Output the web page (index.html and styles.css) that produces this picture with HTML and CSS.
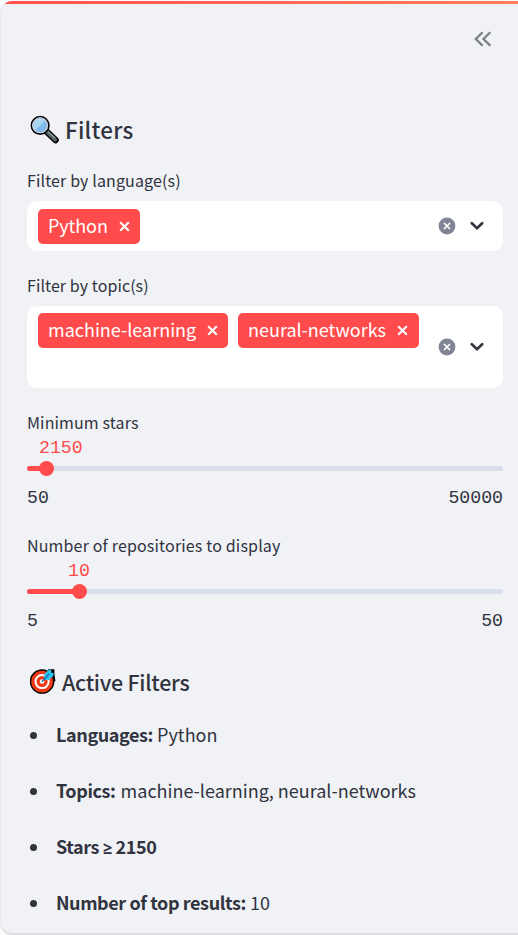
FILE: index.html
```html
<!DOCTYPE html>
<html lang="en">
<head>
<meta charset="utf-8">
<title>Filters</title>
<link rel="stylesheet" href="styles.css">
</head>
<body>
<svg class="symbols" width="0" height="0">
  <symbol id="cross" viewBox="0 0 12 12"><path d="M2 2l8 8M10 2l-8 8" fill="none" stroke="currentColor" stroke-width="1.9"/></symbol>
  <symbol id="clear" viewBox="0 0 18 18"><circle cx="9" cy="9" r="8.4" fill="#808495"/><path d="M6 6l6 6M12 6l-6 6" fill="none" stroke="#fff" stroke-width="1.7"/></symbol>
  <symbol id="chevron" viewBox="0 0 14 10"><path d="M1.8 2.2L7 7.2l5.2-5" fill="none" stroke="#31333f" stroke-width="2.6" stroke-linecap="round"/></symbol>
</svg>
<aside class="sidebar">
  <div class="accent"></div>
  <header class="top">
    <svg class="collapse" viewBox="0 0 18 16"><path d="M8.6 1.2L1.8 8l6.8 6.8M16.3 1.2L9.5 8l6.8 6.8" fill="none" stroke="#7c7e88" stroke-width="2.3"/></svg>
  </header>
  <main class="content">
    <h2 class="heading">
      <svg class="emoji" viewBox="0 0 30 30">
        <path d="M17.5 17.5l9 8.5" stroke="#000" stroke-width="6.6" stroke-linecap="round"/>
        <path d="M17 17l9 8.5" stroke="#526066" stroke-width="4" stroke-linecap="round"/>
        <path d="M18.3 16.8l7.6 7.3" stroke="#8b9a9c" stroke-width="1.3"/>
        <circle cx="10.5" cy="10.8" r="9" fill="#82b9ec" stroke="#000" stroke-width="1.8"/>
        <path d="M4.8 16.5A8 8 0 0 1 16.3 5.1z" fill="#a9d6f4"/>
        <circle cx="10.5" cy="10.8" r="7.6" fill="none" stroke="#c9cdd3" stroke-width="1.2"/>
      </svg>
      <span class="filters-title">Filters</span>
    </h2>

    <section class="field">
      <label class="label lang-label">Filter by language(s)</label>
      <div class="select">
        <div class="tags">
          <span class="tag"><span class="tag-text python">Python</span><svg class="x"><use href="#cross"/></svg></span>
        </div>
        <svg class="clear"><use href="#clear"/></svg>
        <svg class="chevron"><use href="#chevron"/></svg>
      </div>
    </section>

    <section class="field topics">
      <label class="label topic-label">Filter by topic(s)</label>
      <div class="select tall">
        <div class="tags">
          <span class="tag"><span class="tag-text ml">machine-learning</span><svg class="x"><use href="#cross"/></svg></span>
          <span class="tag"><span class="tag-text nn">neural-networks</span><svg class="x"><use href="#cross"/></svg></span>
        </div>
        <svg class="clear"><use href="#clear"/></svg>
        <svg class="chevron"><use href="#chevron"/></svg>
      </div>
    </section>

    <section class="slider">
      <label class="label stars-label">Minimum stars</label>
      <div class="value stars-value">2150</div>
      <div class="track"><div class="fill stars-fill"></div><div class="thumb"></div></div>
      <div class="range"><span>50</span><span>50000</span></div>
    </section>

    <section class="slider">
      <label class="label repos-label">Number of repositories to display</label>
      <div class="value repos-value">10</div>
      <div class="track"><div class="fill repos-fill"></div><div class="thumb"></div></div>
      <div class="range"><span>5</span><span>50</span></div>
    </section>

    <h2 class="heading active">
      <svg class="emoji" viewBox="0 0 30 30">
        <path d="M19.5 2h5v4l1 7-5 2z" fill="#000" stroke="#000" stroke-width="1.5"/>
        <circle cx="12.5" cy="14" r="12" fill="#f03a17" stroke="#000" stroke-width="1.5"/>
        <circle cx="12.5" cy="14" r="6.8" fill="none" stroke="#fff" stroke-width="2.1"/>
        <circle cx="12.5" cy="14" r="2.4" fill="#fff"/>
        <path d="M14.5 10l.5-4 5-4.5 2 .5v2.8l2.5.5-.5 3-4.5 4-4 .2z" fill="#2bc5f2"/>
        <path d="M12.3 14.2L20 6" stroke="#1768a8" stroke-width="1.3"/>
      </svg>
      <span class="active-title">Active Filters</span>
    </h2>
    <ul class="list">
      <li><span><b>Languages:</b> Python</span></li>
      <li><span><b>Topics:</b> <span class="names">machine-learning, neural-networks</span></span></li>
      <li><span><b>Stars <span class="gte">≥</span> 2150</b></span></li>
      <li><span><b>Number of top results:</b> 10</span></li>
    </ul>
  </main>
</aside>
</body>
</html>
```
FILE: styles.css
```css
* { box-sizing: border-box; }
body {
  margin: 0;
  height: 935px;
  overflow: hidden;
  background: #fafafa;
  color: #31333f;
  font-family: "Noto Sans CJK SC", "Source Sans Pro", sans-serif;
  font-size: 18px;
}
.symbols { display: block; }
svg { flex: none; display: block; }
.sidebar {
  height: 934px;
  margin-top: 1px;
  background: #f0f2f6;
  border-left: 1px solid #e6e7e9;
  border-bottom: 2px solid #dddfe2;
  border-radius: 12px 0 0 12px;
  overflow: hidden;
}
.accent { height: 3px; background: linear-gradient(90deg, #ff4f4e, #ff7c5c); }
.top { display: flex; justify-content: flex-end; height: 110px; padding: 27px 26px 0 0; }
.collapse { width: 18px; height: 16px; }
.content { padding: 0 15px 0 26px; }
.heading {
  display: flex;
  align-items: center;
  height: 30px;
  margin: 0;
  font-size: 22.4px;
  line-height: 30px;
  font-weight: 500;
  white-space: nowrap;
}
.filters-title { letter-spacing: 0.25px; }
.emoji { width: 29px; height: 29px; margin: 1px 6px 0 3px; }
.label {
  display: block;
  height: 24px;
  font-size: 16px;
  line-height: 24px;
  letter-spacing: 0.13px;
  white-space: nowrap;
}
.topic-label { letter-spacing: 0.08px; }
.repos-label { letter-spacing: 0.16px; }
.field { margin-top: 24px; }
.topics { margin-top: 22px; }
.select {
  display: flex;
  align-items: center;
  height: 50px;
  margin-top: 9px;
  padding: 0 19px 0 11px;
  border-radius: 10px;
  background: #fff;
}
.tall { height: 82px; }
.tags { display: flex; align-self: flex-start; flex: 1; gap: 10px; padding-top: 7px; }
.select:not(.tall) .tags { padding-top: 8px; }
.tag {
  display: flex;
  align-items: center;
  height: 35px;
  padding: 0 9px 0 10px;
  gap: 10px;
  border-radius: 5px;
  background: #ff4b4b;
  color: #fff;
}
.tag-text { height: 36px; white-space: nowrap; line-height: 33px; }
.x { width: 13px; height: 13px; }
.clear { width: 18px; height: 18px; }
.chevron { width: 14px; height: 10px; margin-left: 14px; }
.python { width: 60px; letter-spacing: -0.1px; line-height: 32px; }
.ml { width: 148px; }
.nn { width: 138px; }
.tall .tag:last-child { padding-right: 10px; }
.slider { height: 123px; padding-top: 22px; }
.value {
  height: 24px;
  color: #ff4b4b;
  font: 18.2px/29px "Liberation Mono", monospace;
}
.stars-value { padding-left: 12px; }
.repos-value { padding-left: 41px; }
.track {
  display: flex;
  align-items: center;
  height: 5px;
  margin-top: 8px;
  border-radius: 3px;
  background: #d9dfea;
}
.fill { height: 5px; border-radius: 3px 0 0 3px; background: #ff4b4b; }
.stars-fill { width: 20px; }
.repos-fill { width: 53px; }
.thumb { flex: none; width: 15px; height: 15px; margin-left: -8px; border-radius: 50%; background: #ff4b4b; }
.range {
  display: flex;
  justify-content: space-between;
  margin-top: 15px;
  font: 18.2px/24px "Liberation Mono", monospace;
}
.active { margin-top: 32px; }
.active .emoji { margin: 2px 3px 0 3px; }
.active-title { font-size: 21.4px; letter-spacing: -0.25px; padding-top: 1px; }
.list { margin: 25px 0 0; padding: 0; list-style: none; }
.list li {
  display: flex;
  align-items: center;
  height: 28px;
  margin-bottom: 28px;
  line-height: 26px;
  white-space: nowrap;
}
.list li > span { height: 28px; }
.list li::before {
  content: "";
  width: 7px;
  height: 7px;
  margin: 0 19px 0 3px;
  border-radius: 50%;
  background: #31333f;
}
b { font-weight: 600; letter-spacing: -0.4px; }
.names { margin-left: 1px; }
.gte { font-family: "Open Sans", sans-serif; font-size: 16.5px; font-weight: 700; line-height: 1; }
```
